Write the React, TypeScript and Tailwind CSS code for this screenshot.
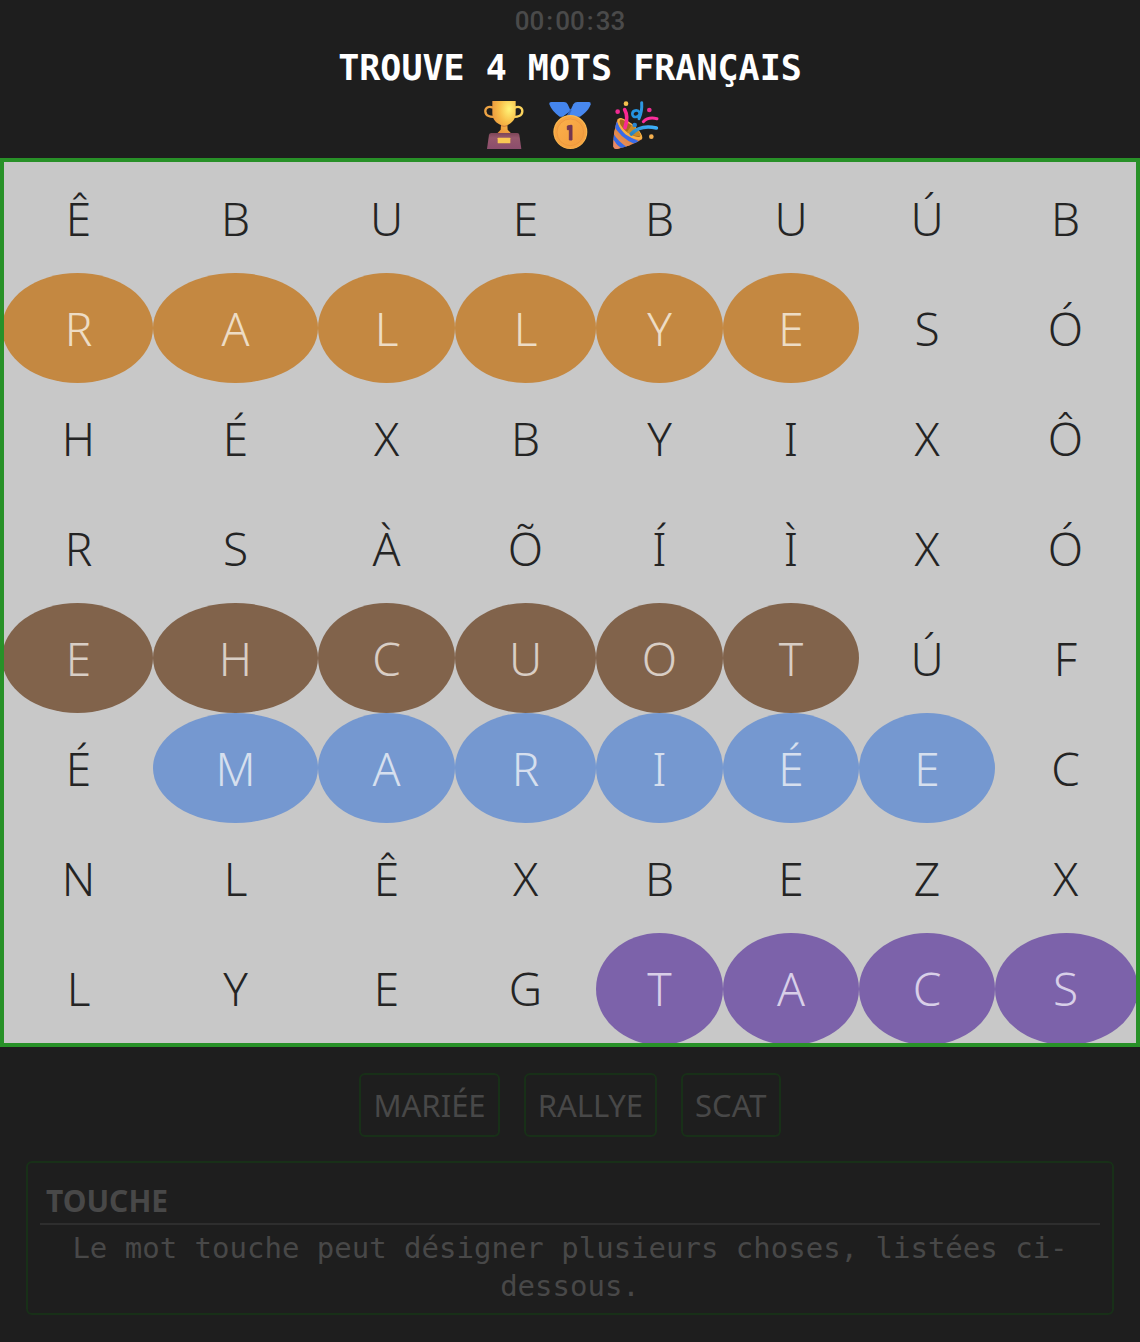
import React from 'react';

type Tone = 'plain' | 'orange' | 'brown' | 'blue' | 'purple';

const toneClass: Record<Tone, string> = {
  plain: 'text-[#242424]',
  orange: 'rounded-[50%] bg-[#c36d08] text-[#fee5c5] opacity-70',
  brown: 'rounded-[50%] bg-[#643917] text-[#e0d1c5] opacity-70',
  blue: 'rounded-[50%] bg-[#5284d4] text-[#dceaff] opacity-70',
  purple: 'rounded-[50%] bg-[#5c389e] text-[#dfd2f6] opacity-70',
};

type Row = { letters: string; tone?: Tone; from?: number; to?: number };

const rows: Row[] = [
  { letters: 'ÊBUEBUÚB' },
  { letters: 'RALLYESÓ', tone: 'orange', from: 0, to: 5 },
  { letters: 'HÉXBYIXÔ' },
  { letters: 'RSÀÕÍÌXÓ' },
  { letters: 'EHCUOTÚF', tone: 'brown', from: 0, to: 5 },
  { letters: 'ÉMARIÉEC', tone: 'blue', from: 1, to: 6 },
  { letters: 'NLÊXBEZX' },
  { letters: 'LYEGTACS', tone: 'purple', from: 4, to: 7 },
];

const columns = ['w-[151px]', 'w-[165px]', 'w-[137px]', 'w-[141px]', 'w-[127px]', 'w-[136px]', 'w-[136px]', 'w-[143px]'];

function Trophy() {
  return (
    <svg viewBox="29 30 144 150" className="h-[50px] w-12" role="img" aria-label="Trophée">
      <defs>
        <radialGradient id="cup" cx="0.72" cy="0.25" r="0.85">
          <stop offset="0" stopColor="#fff478" />
          <stop offset="0.5" stopColor="#f8bd48" />
          <stop offset="1" stopColor="#e8903c" />
        </radialGradient>
        <linearGradient id="plinth" x1="0" y1="0" x2="0" y2="1">
          <stop offset="0" stopColor="#7d4557" />
          <stop offset="0.3" stopColor="#96586c" />
          <stop offset="1" stopColor="#8b4d6c" />
        </linearGradient>
      </defs>
      <path d="M68 53C54 47 44 53 45 65C46 78 60 82 75 80" fill="none" stroke="#eda344" strokeWidth="7" />
      <path d="M133 53C147 47 157 53 156 65C155 78 141 82 126 80" fill="none" stroke="#fbd45e" strokeWidth="7" />
      <path d="M66 33H136V70C136 89 124 100 111 105L112 119L122 130H81L91 119L92 105C78 100 66 89 66 70Z" fill="url(#cup)" />
      <path d="M92 107Q101 111 111 107" fill="none" stroke="#c9783b" strokeWidth="3" />
      <path d="M63 129H141Q146 129 147 134L153 177H50L56 134Q57 129 63 129Z" fill="url(#plinth)" />
      <rect x="82" y="143" width="38" height="17" rx="2" fill="#fac854" />
    </svg>
  );
}

function Medal() {
  return (
    <svg viewBox="227 30 144 150" className="h-[50px] w-12" role="img" aria-label="Médaille d'or">
      <defs>
        <linearGradient id="gold" x1="0" y1="0" x2="1" y2="1">
          <stop offset="0" stopColor="#fbb04a" />
          <stop offset="1" stopColor="#f29c3e" />
        </linearGradient>
      </defs>
      <path d="M243 36H281Q289 36 292 43L301 62L277 80H268C252 70 242 56 237 43Q236 36 243 36Z" fill="#4485ed" />
      <path d="M356 36H321Q313 36 309 43L291 80H329C346 70 357 56 361 43Q362 36 356 36Z" fill="#4888ef" />
      <path d="M287 81L300 56L304 60L295 81Z" fill="#3569c6" />
      <circle cx="300" cy="126" r="51" fill="#fab850" />
      <circle cx="300" cy="127" r="48" fill="#f5a443" />
      <circle cx="300" cy="127" r="40" fill="url(#gold)" stroke="#e8923c" strokeWidth="2" />
      <path d="M291 108Q298 107 299 106H305V150H297V119H291Z" fill="#723650" stroke="#723650" strokeWidth="3" strokeLinejoin="round" />
    </svg>
  );
}

function Popper() {
  return (
    <svg viewBox="425 30 144 150" className="h-[50px] w-12" role="img" aria-label="Cotillons">
      <defs>
        <clipPath id="cone">
          <path d="M442 86Q428 125 429 170Q430 178 440 177Q485 167 516 147Q514 112 442 86Z" />
        </clipPath>
        <linearGradient id="streamer" x1="0" y1="1" x2="1" y2="0">
          <stop offset="0" stopColor="#2a83be" />
          <stop offset="1" stopColor="#3db0fb" />
        </linearGradient>
      </defs>
      <g clipPath="url(#cone)">
        <rect x="425" y="80" width="95" height="100" fill="#e18a4b" />
        <path d="M433 96Q450 138 503 160" fill="none" stroke="#396be8" strokeWidth="13" />
        <path d="M425 116Q438 151 484 174" fill="none" stroke="#e58b52" strokeWidth="10" />
        <path d="M422 130Q437 160 474 181" fill="none" stroke="#356ae6" strokeWidth="12" />
        <path d="M425 153Q433 169 448 182" fill="none" stroke="#e98968" strokeWidth="12" />
      </g>
      <path d="M444 86C437 95 450 125 475 139C498 152 516 151 516 143C517 128 490 101 465 89C454 83 447 83 444 86Z" fill="#f8b146" />
      <path d="M449 90C443 98 459 121 479 132C496 142 510 143 510 137C507 123 487 106 467 95C457 89 452 87 449 90Z" fill="#a8691f" />
      <path d="M484 106Q505 118 511 137Q491 142 470 126Z" fill="#c88a25" />
      <path d="M463 59Q475 80 464 113" fill="none" stroke="#fb2892" strokeWidth="11" strokeLinecap="round" />
      <path d="M483 132Q510 103 558 114" fill="none" stroke="url(#streamer)" strokeWidth="11" strokeLinecap="round" />
      <path d="M519 95Q533 80 560 86" fill="none" stroke="#fb2e9c" strokeWidth="9" strokeLinecap="round" />
      <path d="M514 38Q516 64 506 86" fill="none" stroke="#2d98e2" strokeWidth="9" strokeLinecap="round" />
      <path d="M508 68C502 57 486 61 486 72C487 85 504 84 510 68" fill="none" stroke="#2594df" strokeWidth="8" />
      <circle cx="467" cy="41" r="7" fill="#f5c14e" />
      <circle cx="442" cy="65" r="7" fill="#ee2a91" />
      <circle cx="537" cy="60" r="7" fill="#ed2c91" />
      <circle cx="493" cy="105" r="7" fill="#2885d0" />
      <circle cx="543" cy="140" r="7" fill="#f5b050" />
    </svg>
  );
}

function LetterGrid() {
  return (
    <table className="w-full table-fixed border-collapse border-4 border-[#289128] bg-[#c8c8c8] font-['Noto_Sans',sans-serif] text-[46px] font-light leading-[54px]">
      <colgroup>
        {columns.map((width, i) => (
          <col key={i} className={width} />
        ))}
      </colgroup>
      <tbody>
        {rows.map((row, r) => (
          <tr key={r} className="h-[110px] first:h-[113px] last:h-[112px]">
            {[...row.letters].map((letter, c) => {
              const found = row.tone && c >= row.from! && c <= row.to!;
              return (
                <td key={c} className={`p-0 text-center align-middle ${toneClass[found ? row.tone! : 'plain']}`}>
                  {letter}
                </td>
              );
            })}
          </tr>
        ))}
      </tbody>
    </table>
  );
}

export default function App() {
  return (
    <div className="min-h-screen bg-[#1e1e1e]">
      <header className="flex flex-col items-center pb-2">
        <div className="flex gap-0.5 font-['Roboto',sans-serif] text-[26px] font-medium leading-[42px] text-[#4a4a4a]">
          <span>00</span>
          <span>:</span>
          <span>00</span>
          <span>:</span>
          <span>33</span>
        </div>
        <h1 className="text-center font-['DejaVu_Sans_Mono',monospace] text-[35px] font-bold leading-[52px] text-white">TROUVE 4 MOTS FRANÇAIS</h1>
        <div className="mt-1.5 flex gap-[18px]">
          <Trophy />
          <Medal />
          <Popper />
        </div>
      </header>

      <LetterGrid />

      <main className="px-[26px] pt-[26px] text-[#484848]">
        <ul className="flex flex-wrap justify-center gap-6 font-['Noto_Sans',sans-serif] text-[31px] leading-[60px]">
          {['MARIÉE', 'RALLYE', 'SCAT'].map((word) => (
            <li key={word} className="rounded-md border-2 border-[#183018] px-3">
              {word}
            </li>
          ))}
        </ul>
        <section className="mt-6 rounded-md border-2 border-[#183018] px-3 pb-2 pt-4">
          <h2 className="border-b-2 border-[#2e2e2e] px-1.5 font-['Noto_Sans',sans-serif] text-[30px] font-bold leading-[44px]">TOUCHE</h2>
          <p className="px-1.5 pt-1 text-center font-['DejaVu_Sans_Mono',monospace] text-[29px] leading-[38px]">
            Le mot touche peut désigner plusieurs choses, listées ci-dessous.
          </p>
        </section>
      </main>
    </div>
  );
}
